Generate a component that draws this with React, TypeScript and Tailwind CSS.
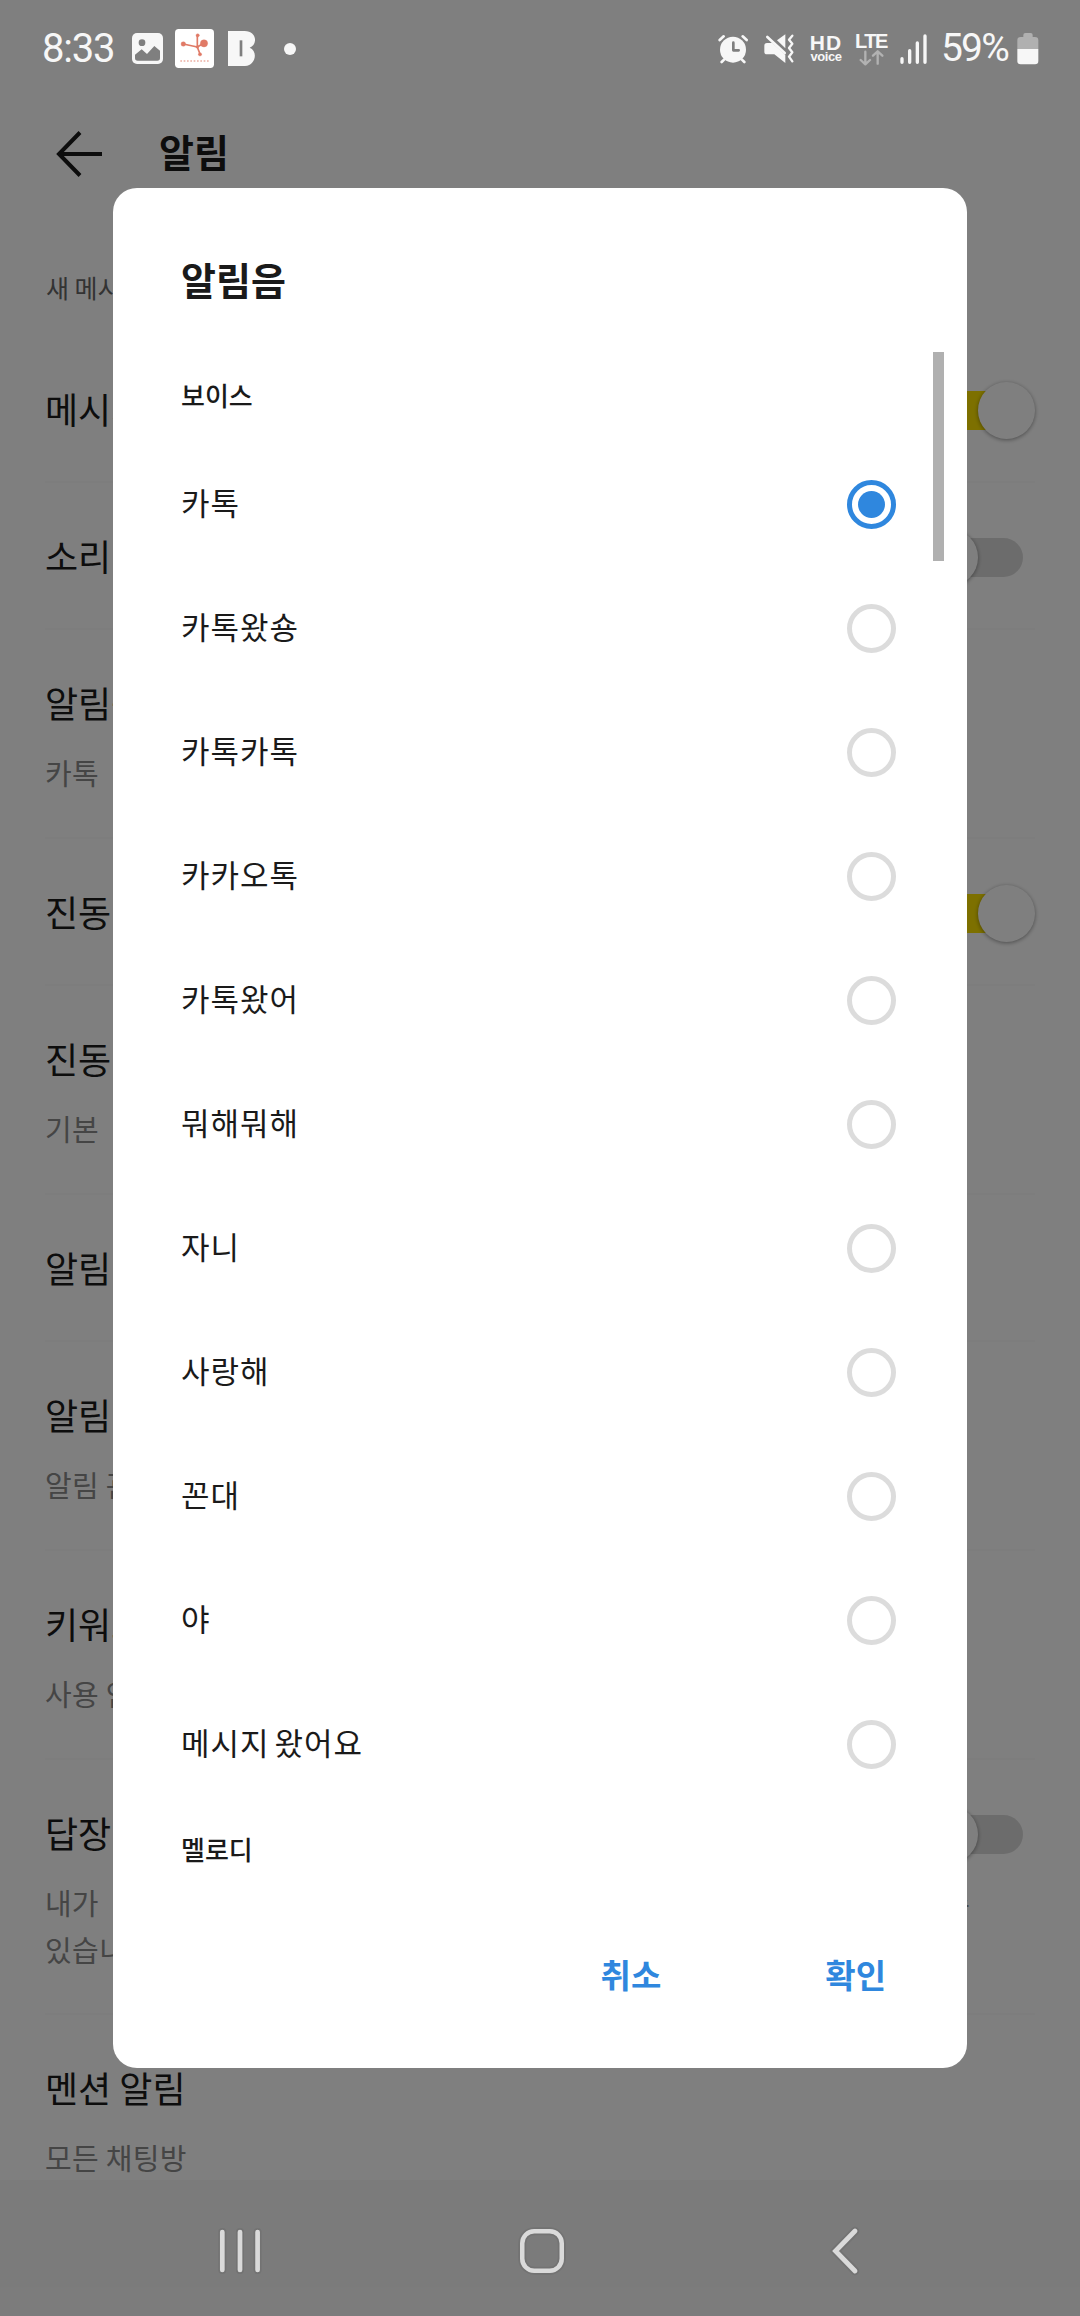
import React from "react";

const FONT = "font-['Noto_Sans_CJK_KR','Noto_Sans',sans-serif]";

function Switch({ on }: { on: boolean }) {
  return (
    <div className="relative h-[57px] w-[114px] shrink-0">
      <div className={"absolute top-[9px] left-3 h-[39px] w-[90px] rounded-full " + (on ? "bg-[#fae100]" : "bg-[#d9d9d9]")} />
      <div
        className={
          "absolute top-0 h-[57px] w-[57px] rounded-full bg-white shadow-[0_1px_4px_rgba(0,0,0,0.4)] " +
          (on ? "left-[57px]" : "left-0")
        }
      />
    </div>
  );
}

type Setting = { title: string; sub?: string[]; on?: boolean; height: string };

const settings: Setting[] = [
  { title: "메시지", on: true, height: "h-[147px]" },
  { title: "소리", on: false, height: "h-[147px]" },
  { title: "알림음", sub: ["카톡"], height: "h-[209px]" },
  { title: "진동", on: true, height: "h-[147px]" },
  { title: "진동", sub: ["기본"], height: "h-[209px]" },
  { title: "알림", height: "h-[147px]" },
  { title: "알림", sub: ["알림 관리"], height: "h-[209px]" },
  { title: "키워드", sub: ["사용 안 함"], height: "h-[209px]" },
  {
    title: "답장",
    sub: ["내가 작성한 메시지에 답장이 오면 채팅방 알림이 꺼져 있어도 받을 수", "있습니다."],
    on: false,
    height: "h-[255px]",
  },
  { title: "멘션 알림", sub: ["모든 채팅방"], height: "h-[209px]" },
];

function SettingsPage() {
  return (
    <div className="col-start-1 row-start-1 flex h-[2316px] flex-col overflow-hidden bg-white">
      <header className="flex h-[246px] shrink-0 items-start pt-[130px] pl-14">
        <svg width="47" height="48" viewBox="0 0 47 48" fill="none" stroke="#1a1a1a" strokeWidth="4">
          <path d="M24 2.5 3 24l21 21.500M3 24h43" />
        </svg>
        <h1 className="-mt-[2px] ml-[56px] text-[38px] leading-[46px] font-bold text-[#1a1a1a]">알림</h1>
      </header>
      <div className="flex h-[90px] shrink-0 items-center pl-[46px] text-[25px] text-[#666]">
        <span className="-mt-[7px]">새 메시지</span>
      </div>
      <main className="h-[1844px] overflow-hidden">
        {settings.map((s, i) => (
          <section key={i} className={"mx-[45px] flex flex-col border-b-2 border-[#fbfbfb] " + s.height}>
            <div className="relative flex h-[146px] shrink-0 items-center text-[36px] whitespace-nowrap text-[#1a1a1a]">
              <span className="-mt-[3px]">{s.title}</span>
              {s.on !== undefined && (
                <div className="absolute top-[46px] right-0">
                  <Switch on={s.on} />
                </div>
              )}
            </div>
            {s.sub && (
              <div className="-mt-[27px] flex flex-col text-[29px] leading-[47px] whitespace-nowrap text-[#8a8a8a]">
                {s.sub.map((line, j) => (
                  <span key={j} className={s.sub!.length > 1 && j === 0 ? "w-[925px] [text-align-last:justify]" : "tracking-[0.300px]"}>
                    {line}
                  </span>
                ))}
              </div>
            )}
          </section>
        ))}
      </main>
      <div className="h-[136px] shrink-0 bg-[#f7f7f7]" />
    </div>
  );
}

function StatusBar() {
  return (
    <div className="flex h-[97px] items-center text-[#f7f7f7]">
      <span className="ml-[42px] w-[90px] font-['Roboto'] text-[40px] leading-none tracking-[-1.200px]">8:33</span>
      <svg width="31" height="31" viewBox="396 99 93 93">
        <rect x="396" y="99" width="93" height="93" rx="15" fill="#f7f7f7" />
        <circle cx="426" cy="128" r="10" fill="#7f7f7f" />
        <path d="M405 164l20-16 16 14 22-24 17 14v22q0 8-8 8h-59q-8 0-8-8z" fill="#7f7f7f" />
      </svg>
      <svg className="ml-3" width="39" height="39" viewBox="525 87 117 117">
        <rect x="525" y="87" width="117" height="117" rx="11" fill="#fff" />
        <g stroke="#e07a66" fill="#e07a66">
          <path d="M550 132l42 9M592 106v35l8 21M592 141l20-12" strokeWidth="5" fill="none" />
          <circle cx="550" cy="132" r="7" />
          <circle cx="593" cy="106" r="5" />
          <circle cx="600" cy="163" r="5" />
          <circle cx="612" cy="130" r="11" />
          <circle cx="592" cy="141" r="4" />
          <path d="M541 183h88" strokeWidth="6" strokeDasharray="5 5" opacity="0.45" />
        </g>
      </svg>
      <svg className="ml-[14px]" width="27" height="35" viewBox="684 93 81 105">
        <path d="M684 93h50c38 0 39 42 15 50 26 9 18 55-14 55h-51z" fill="#f7f7f7" />
        <path d="M723 121v48" stroke="#7f7f7f" strokeWidth="8" />
      </svg>
      <div className="ml-[29px] h-3 w-3 rounded-full bg-[#f7f7f7]" />

      <svg className="ml-[422px]" width="30" height="30" viewBox="85 102 90 90" fill="none" stroke="#f7f7f7" strokeLinecap="round">
        <circle cx="130" cy="149" r="39" fill="#f7f7f7" stroke="none" />
        <path d="M90 120l12-11M171 120l-12-11M104 178l-8 8M156 178l8 8" strokeWidth="8" />
        <path d="M131 128v23h16" stroke="#7f7f7f" strokeWidth="8" strokeLinejoin="round" />
      </svg>
      <svg className="ml-[16px]" width="30" height="30" viewBox="221 102 90 90" fill="#f7f7f7">
        <path d="M222 137q0-8 8-8h16l39 36v24l-33-26h-22q-8 0-8-8zM260 121l25-18v42z" />
        <path d="M231 111l52 48" stroke="#f7f7f7" strokeWidth="8" strokeLinecap="round" />
        <path d="M306 107l-10 12 10 12-10 13 10 13-10 13 10 14" fill="none" stroke="#f7f7f7" strokeWidth="7" strokeLinecap="round" strokeLinejoin="round" />
      </svg>
      <div className="ml-[15px] flex w-[34px] flex-col items-center font-['Liberation_Sans'] font-bold">
        <span className="text-[21px] leading-[16px] tracking-[1px]">HD</span>
        <span className="text-[13px] leading-[11px] tracking-[-0.400px]">voice</span>
      </div>
      <div className="ml-[11px] flex w-[34px] flex-col items-center">
        <span className="mt-[1px] font-['Liberation_Sans'] text-[20px] leading-[17px] font-bold tracking-[-1.500px]">LTE</span>
        <svg width="25" height="16" viewBox="504 151 75 48" fill="none" stroke="#b2b2b2" strokeWidth="7" strokeLinecap="round" strokeLinejoin="round">
          <path d="M523 156v36M509 181l14 13 14-13M560 192v-36M546 168l14-13 14 13" />
        </svg>
      </div>
      <svg className="ml-[12px]" width="28" height="30" viewBox="630 100 84 90" stroke="#f7f7f7" strokeWidth="10" strokeLinecap="round">
        <path d="M636 174v11M659 150v35M682 127v58M705 106v79" />
      </svg>
      <span className="ml-[13px] w-[76px] font-['Roboto'] text-[39px] leading-none tracking-[-1.800px]">59%</span>
      <svg width="22" height="32" viewBox="980 96 66 96">
        <path d="M999 102q0-6 6-6h16q6 0 6 6v6h7q10 0 10 10v26h-63v-26q0-10 10-10h8z" fill="#b0b0b0" />
        <path d="M981 144h63v36q0 10-10 10h-43q-10 0-10-10z" fill="#f7f7f7" />
      </svg>
    </div>
  );
}

function Radio({ checked }: { checked: boolean }) {
  return (
    <span
      className={
        "flex h-[49px] w-[49px] items-center justify-center rounded-full border-[5px] " +
        (checked ? "border-[#2f87de]" : "border-[#dcdcdc]")
      }
    >
      {checked && <span className="h-[27px] w-[27px] rounded-full bg-[#2f87de]" />}
    </span>
  );
}

const voices = ["카톡", "카톡왔숑", "카톡카톡", "카카오톡", "카톡왔어", "뭐해뭐해", "자니", "사랑해", "꼰대", "야", "메시지 왔어요"];

function Dialog() {
  return (
    <div className="mx-[113px] mt-[91px] flex h-[1880px] flex-col rounded-[24px] bg-white text-[#1a1a1a]">
      <h2 className="flex h-[164px] items-center pt-[17px] pl-[68px] text-[38px] leading-none font-bold">알림음</h2>
      <div className="relative h-[1544px] overflow-hidden">
        <h3 className="flex h-[90px] items-center pb-[5px] pl-[68px] text-[26px] font-medium">보이스</h3>
        {voices.map((v, i) => (
          <div key={v} className="flex h-[124px] items-center justify-between pr-[71px] pl-[68px] text-[31px] tracking-[1px] [word-spacing:-3px]">
            <span className="-mt-[4px]">{v}</span>
            <Radio checked={i === 0} />
          </div>
        ))}
        <h3 className="flex h-[88px] items-center pb-[4px] pl-[68px] text-[26px] font-medium">멜로디</h3>
        <div className="absolute top-0 right-[23px] h-[209px] w-[11px] bg-[#b0b0b0]" />
      </div>
      <div className="mt-[47px] flex justify-end pr-[81px] text-[33px] leading-[62px] font-bold text-[#2f87de]">
        <button className="mr-[164px]">취소</button>
        <button>확인</button>
      </div>
    </div>
  );
}

function NavBar() {
  return (
    <div className="mt-auto flex h-[135px] items-center pt-[4px]">
      <svg className="ml-[216px]" width="48" height="52" viewBox="0 0 48 52" strokeLinecap="round">
        <path d="M6.300 7v38M24 7v38M41.600 7v38" stroke="#737373" strokeWidth="8" />
        <path d="M6.300 7v38M24 7v38M41.600 7v38" stroke="#dadada" strokeWidth="4.700" />
      </svg>
      <svg className="ml-[252px]" width="52" height="52" viewBox="0 0 52 52" fill="none">
        <rect x="6.250" y="6.250" width="39.500" height="39.500" rx="12" stroke="#737373" strokeWidth="8" />
        <rect x="6.250" y="6.250" width="39.500" height="39.500" rx="12" stroke="#dadada" strokeWidth="4.500" />
      </svg>
      <svg className="ml-[260px]" width="36" height="54" viewBox="0 0 36 54" fill="none" strokeLinecap="round">
        <path d="M27 7 7.500 27 27 47" stroke="#737373" strokeWidth="8.500" />
        <path d="M27 7 7.500 27 27 47" stroke="#dadada" strokeWidth="4.800" />
      </svg>
    </div>
  );
}

export default function App() {
  return (
    <div className={"grid h-[2316px] w-[1080px] overflow-hidden " + FONT}>
      <SettingsPage />
      <div className="z-10 col-start-1 row-start-1 flex h-[2316px] flex-col bg-black/50">
        <StatusBar />
        <Dialog />
        <NavBar />
      </div>
    </div>
  );
}
